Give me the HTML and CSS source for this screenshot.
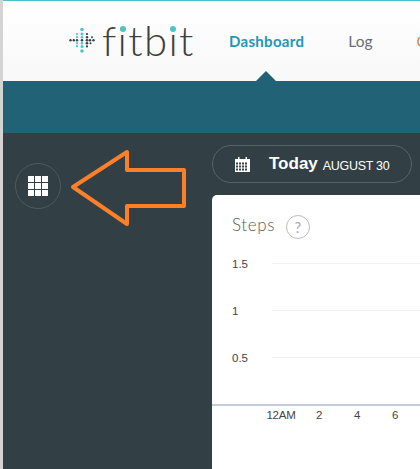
FILE: index.html
```html
<!DOCTYPE html>
<html lang="en">
<head>
<meta charset="utf-8">
<title>Fitbit Dashboard</title>
<link rel="stylesheet" href="styles.css">
</head>
<body>
<div class="page">
  <header class="header">
    <div class="brand">
      <svg class="brand-mark" width="26" height="26" viewBox="0 0 26 26" aria-hidden="true">
        <g class="dot-teal">
          <circle cx="13" cy="2.5" r="1.8"/><circle cx="13" cy="7" r="1.5"/><circle cx="8" cy="7" r="1.1"/>
          <circle cx="8" cy="10.2" r="1.1"/><circle cx="13" cy="10.2" r="1.3"/>
          <circle cx="8" cy="16.2" r="1.1"/><circle cx="13" cy="16.2" r="1.3"/>
          <circle cx="8" cy="19.2" r="1.1"/><circle cx="13" cy="19.6" r="1.5"/><circle cx="13" cy="24" r="1.8"/>
        </g>
        <g class="dot-dark">
          <circle cx="18" cy="7" r="1.1"/><circle cx="18" cy="10.2" r="1.2"/><circle cx="23" cy="10.2" r="1"/>
          <circle cx="1.5" cy="13.2" r="1.2"/><circle cx="4.8" cy="13.2" r="1.2"/><circle cx="8" cy="13.2" r="1.2"/><circle cx="13" cy="13.2" r="1.3"/><circle cx="18" cy="13.2" r="1.3"/><circle cx="21" cy="13.2" r="1.3"/><circle cx="24.5" cy="13.2" r="1.2"/>
          <circle cx="18" cy="16.2" r="1.3"/><circle cx="21.5" cy="16.2" r="1"/><circle cx="18" cy="19.4" r="1.1"/>
        </g>
      </svg>
      <span class="brand-name">f<span class="brand-i">i</span>tb<span class="brand-i">i</span>t</span>
    </div>
    <nav class="nav">
      <a class="nav-item nav-active">Dashboard</a>
      <a class="nav-item nav-log">Log</a>
      <a class="nav-item nav-cut">C</a>
    </nav>
  </header>
  <div class="band"></div>
  <div class="content">
    <aside class="side">
      <button class="grid-btn" aria-label="Tiles">
        <span class="tile"></span><span class="tile"></span><span class="tile"></span>
        <span class="tile"></span><span class="tile"></span><span class="tile"></span>
        <span class="tile"></span><span class="tile"></span><span class="tile"></span>
      </button>
    </aside>
    <main class="main">
      <div class="date-pill">
        <svg class="cal" width="15" height="15" viewBox="0 0 15 15" aria-hidden="true">
          <path class="cal-body" fill-rule="evenodd" d="M0 2h3V0h1.5v2h6V0H12v2h3v13H0zM1 5.500v2h2v-2zm3 0v2h2v-2zm3 0v2h2v-2zm3 0v2h2v-2zm-9 3v2h2v-2zm3 0v2h2v-2zm3 0v2h2v-2zm3 0v2h2v-2zm-9 3v2h2v-2zm3 0v2h2v-2zm3 0v2h2v-2zm3 0v2h2v-2z"/>
        </svg>
        <span class="today">Today</span>
        <span class="date">AUGUST 30</span>
      </div>
      <section class="card">
        <div class="card-title">
          <h2 class="steps">Steps</h2>
          <span class="help">?</span>
        </div>
        <div class="chart">
          <div class="row"><span class="y">1.5</span><span class="rule"></span></div>
          <div class="row"><span class="y">1</span><span class="rule"></span></div>
          <div class="row"><span class="y">0.5</span><span class="rule"></span></div>
        </div>
        <div class="axis">
          <span class="tick">12AM</span><span class="tick">2</span><span class="tick">4</span><span class="tick">6</span>
        </div>
      </section>
    </main>
  </div>
  <svg class="arrow" width="130" height="86" viewBox="0 0 130 86" aria-hidden="true">
    <path d="M3 41 L57 6 V24 H114 V60 H57 V78 Z"/>
  </svg>
</div>
</body>
</html>
```

FILE: styles.css
```css
* { box-sizing: border-box; }
html, body { margin: 0; height: 100%; overflow: hidden; }
body { background: #fff; font-family: "Liberation Sans", Arial, sans-serif; }
.page {
  position: relative;
  height: 469px;
  width: 420px;
  overflow: hidden;
  border-left: 3px solid #d4d4d4;
  display: flex;
  flex-direction: column;
  background: #323f45;
}
.header {
  height: 81px;
  flex: none;
  border-top: 1px solid #4cc1c3;
  background: linear-gradient(#fff, #f8f8f8);
  display: flex;
  align-items: flex-start;
  padding: 0 0 0 66px;
  position: relative;
}
.brand { flex: none; display: flex; align-items: center; gap: 7px; width: 160px; height: 80px; margin-top: -1px; }
.brand-mark { flex: none; }
.dot-teal { fill: #4cc5c7; }
.dot-dark { fill: #3a3f42; }
.brand-name {
  font-family: Lato, sans-serif;
  font-weight: 300;
  font-size: 42px;
  letter-spacing: 1.3px;
  color: #3d3f41;
  line-height: 1;
}
.brand-i { position: relative; }
.brand-i::after {
  content: "";
  position: absolute;
  left: 2px;
  top: 11px;
  width: 6px;
  height: 6px;
  border-radius: 50%;
  background: #4cc5c7;
}
.nav { flex: none; display: flex; gap: 44px; white-space: nowrap; margin-top: 31px; }
.nav-item { font-family: Lato, sans-serif; font-size: 15px; color: #6a6d70; line-height: 18px; }
.nav-active { position: relative; font-weight: 700; color: #1d98b6; letter-spacing: 0.3px; }
.nav-active::after {
  content: "";
  position: absolute;
  left: 27px;
  top: 39px;
  border-left: 10px solid transparent;
  border-right: 10px solid transparent;
  border-bottom: 10px solid #226276;
}
.nav-log { font-size: 15.500px; }
.nav-cut { color: #d58a3f; }
.band { height: 52px; flex: none; background: #226276; }
.content { flex: 1; display: flex; min-height: 0; }
.side { width: 209px; flex: none; padding: 30px 0 0 12px; }
.grid-btn {
  width: 46px;
  height: 46px;
  border-radius: 50%;
  border: 1px solid #4c5a61;
  background: transparent;
  padding: 0;
  display: grid;
  grid-template-columns: repeat(3, 6px);
  grid-template-rows: repeat(3, 6px);
  gap: 1px;
  justify-content: center;
  align-content: center;
}
.tile { background: #fff; }
.main { flex: 1; min-width: 0; display: flex; flex-direction: column; padding-top: 12px; }
.date-pill {
  width: 200px;
  height: 38px;
  flex: none;
  border: 1px solid #56646a;
  border-radius: 19px;
  display: flex;
  align-items: center;
  padding-left: 22px;
  color: #fff;
  white-space: nowrap;
}
.cal { flex: none; margin-right: 19px; }
.cal-body { fill: #fff; }
.today { font-weight: 700; font-size: 17px; margin-right: 5px; }
.date { font-size: 12.5px; letter-spacing: -0.3px; padding-top: 3px; }
.card {
  margin-top: 12px;
  flex: 1;
  background: #fff;
  border-top-left-radius: 5px;
  padding-top: 17px;
  overflow: hidden;
}
.card-title { display: flex; align-items: center; gap: 11px; padding-left: 20px; height: 25px; }
.steps { margin: 0; font-family: Lato, sans-serif; font-weight: 300; font-size: 17px; color: #555a5e; letter-spacing: 0.6px; }
.help {
  width: 24px;
  height: 24px;
  margin-top: 4px;
  border-radius: 50%;
  border: 1.5px solid #bbb;
  color: #aaa;
  font-size: 15px;
  display: flex;
  align-items: center;
  justify-content: center;
  font-family: Lato, sans-serif;
}
.chart { margin-top: 3px; padding-left: 20px; }
.row { display: flex; align-items: center; height: 47px; }
.y { width: 40px; flex: none; font-size: 11.500px; color: #444; }
.rule { flex: 1; height: 1px; background: #f0f0f0; }
.axis {
  margin-top: 23px;
  border-top: 2px solid #c0cddc;
  height: 17px;
  display: flex;
  padding-left: 50px;
  align-items: flex-end;
  white-space: nowrap;
}
.tick { width: 38px; flex: none; text-align: center; font-size: 11.500px; letter-spacing: -0.2px; color: #444; }
.arrow { position: absolute; left: 67px; top: 146px; }
.arrow path { fill: none; stroke: #fd7f28; stroke-width: 4; stroke-linejoin: round; }
```
